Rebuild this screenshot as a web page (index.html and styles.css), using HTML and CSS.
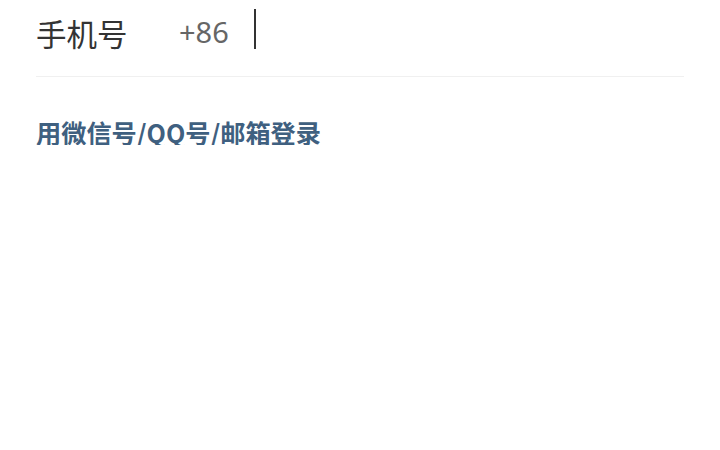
FILE: index.html
```html
<!DOCTYPE html>
<html lang="zh-CN">
<head>
<meta charset="utf-8">
<link rel="stylesheet" href="styles.css">
</head>
<body>
<div class="form">
  <div class="row">
    <span class="label">手机号</span>
    <span class="code">+86</span>
    <span class="cursor"></span>
  </div>
  <a class="alt" href="#">用微信号/QQ号/邮箱登录</a>
</div>
</body>
</html>
```
FILE: styles.css
```css
html, body {
  margin: 0;
  padding: 0;
  background: #ffffff;
}
body {
  font-family: "Noto Sans CJK SC", "Noto Sans", sans-serif;
}
.form {
  width: 648px;
  margin-left: 36px;
}
.row {
  display: flex;
  align-items: flex-start;
  height: 76px;
  border-bottom: 1px solid #f0f0f0;
}
.label {
  font-size: 30.5px;
  color: #333333;
  width: 143px;
  line-height: 1;
  margin-top: 18px;
}
.code {
  font-size: 29px;
  color: #666666;
  font-family: "Noto Sans", sans-serif;
  line-height: 1;
  width: 75px;
  margin-top: 17px;
}
.cursor {
  width: 2px;
  height: 40px;
  background: #333333;
  margin-top: 9px;
}
.alt {
  display: block;
  margin-top: 43px;
  font-size: 25.2px;
  font-weight: bold;
  color: #3f6080;
  text-decoration: none;
  line-height: 1;
}
```
